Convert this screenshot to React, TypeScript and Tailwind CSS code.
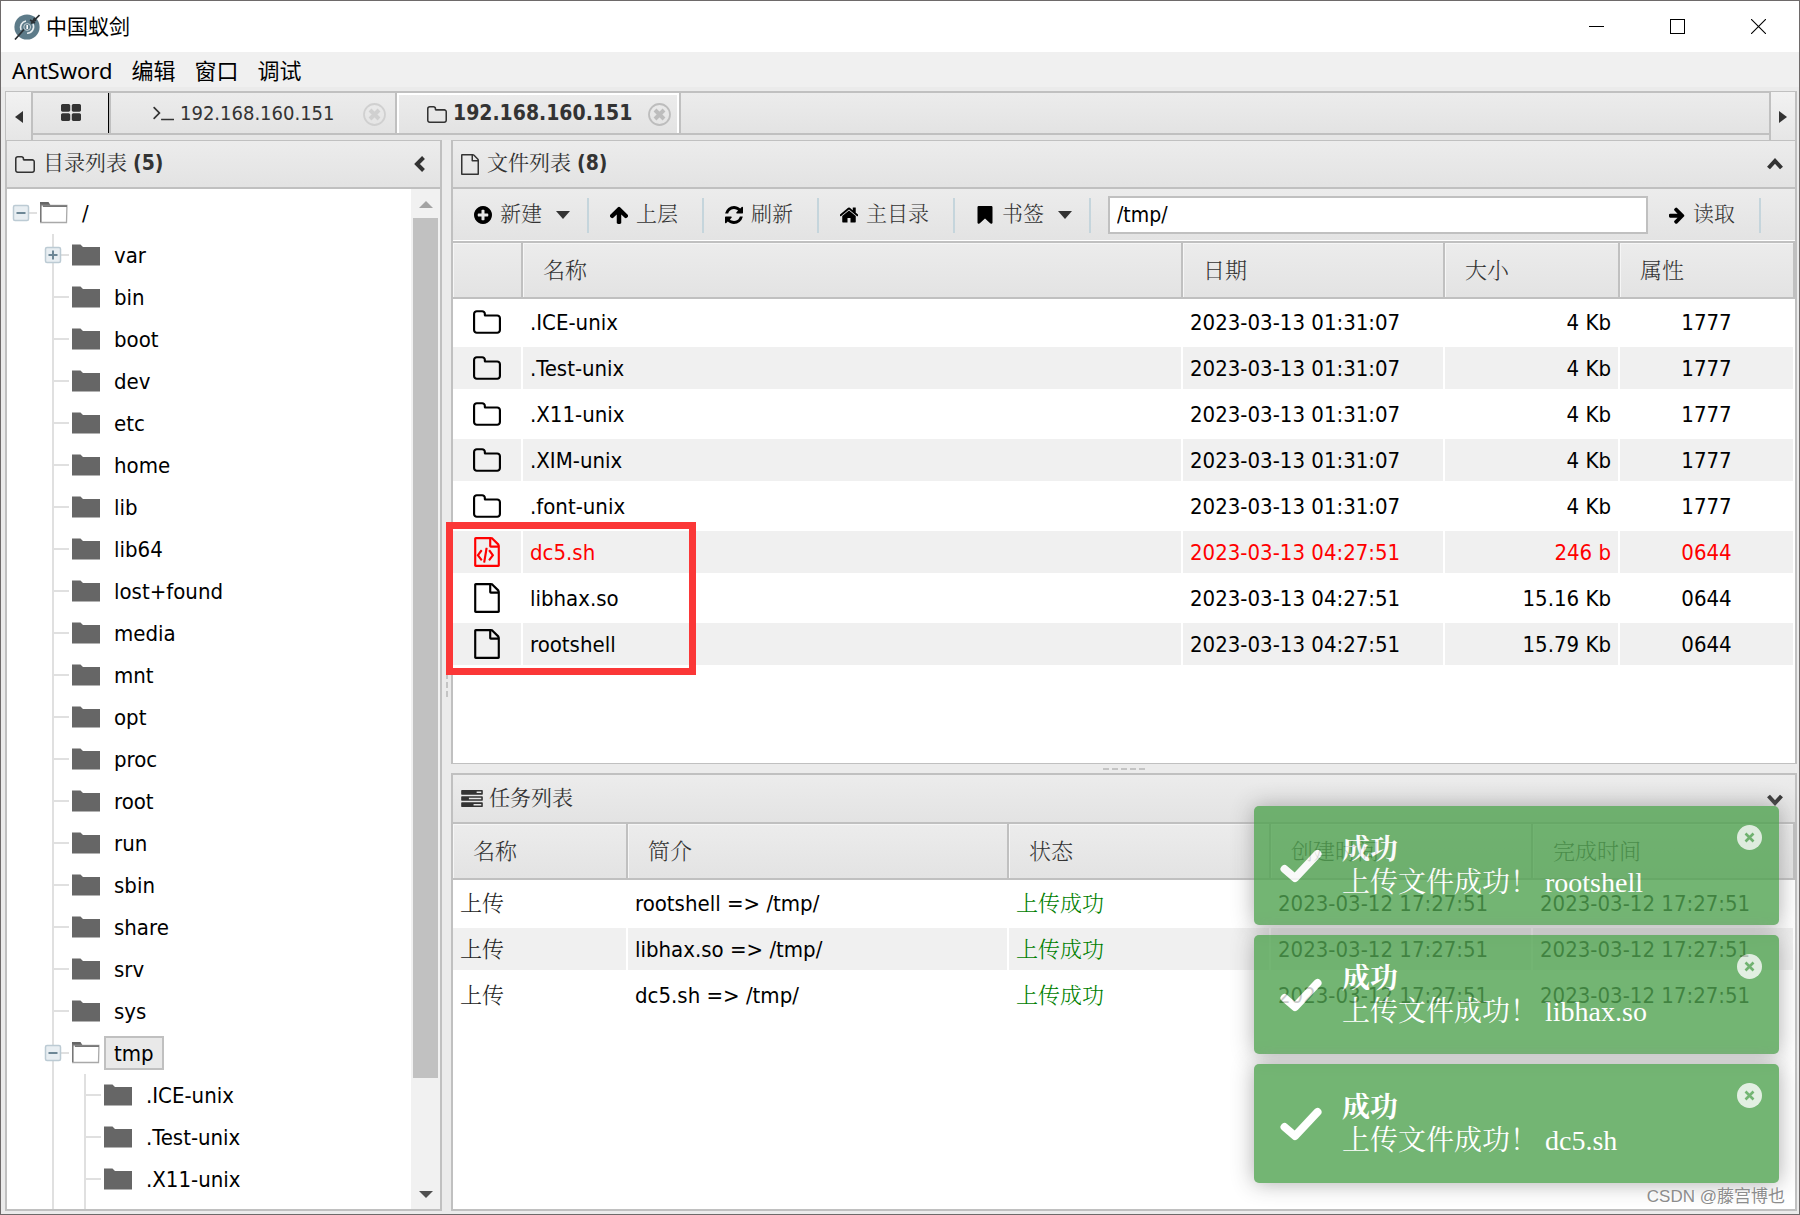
import React, { useState } from 'react';

type IconProps = { d: string; className?: string; box?: string };

// Font Awesome 4 outlines
const ICONS = {
  folder: 'M1536 1312v-704q0-40-28-68t-68-28h-704q-40 0-68-28t-28-68v-64q0-40-28-68t-68-28h-320q-40 0-68 28t-28 68v960q0 40 28 68t68 28h1216q40 0 68-28t28-68zm128-704v704q0 92-66 158t-158 66h-1216q-92 0-158-66t-66-158v-960q0-92 66-158t158-66h320q92 0 158 66t66 158v32h672q92 0 158 66t66 158z',
  file: 'M1596 380q28 28 48 76t20 88v1152q0 40-28 68t-68 28h-1344q-40 0-68-28t-28-68v-1600q0-40 28-68t68-28h896q40 0 88 20t76 48zm-444-244v376h376q-10-29-22-41l-313-313q-12-12-41-22zm384 1528v-1024h-416q-40 0-68-28t-28-68v-416h-768v1536h1280z',
  code: 'M1596 380q28 28 48 76t20 88v1152q0 40-28 68t-68 28h-1344q-40 0-68-28t-28-68v-1600q0-40 28-68t68-28h896q40 0 88 20t76 48zm-444-244v376h376q-10-29-22-41l-313-313q-12-12-41-22zm384 1528v-1024h-416q-40 0-68-28t-28-68v-416h-768v1536h1280zm-1024-896q8-11 21-12.5t24 6.5l51 38q11 8 12.5 21t-6.5 24l-182 243 182 243q8 11 6.5 24t-12.5 21l-51 38q-11 8-24 6.5t-21-12.5l-226-301q-14-19 0-38zm802 301q14 19 0 38l-226 301q-8 11-21 12.5t-24-6.5l-51-38q-11-8-12.5-21t6.5-24l182-243-182-243q-8-11-6.5-24t12.5-21l51-38q11-8 24-6.5t21 12.5zm-620 461q-13-2-20.5-13t-5.5-24l138-831q2-13 13-20.5t24-5.5l63 10q13 2 20.5 13t5.5 24l-138 831q-2 13-13 20.5t-24 5.5z',
  plus: 'M1344 960v-128q0-26-19-45t-45-19h-256v-256q0-26-19-45t-45-19h-128q-26 0-45 19t-19 45v256h-256q-26 0-45 19t-19 45v128q0 26 19 45t45 19h256v256q0 26 19 45t45 19h128q26 0 45-19t19-45v-256h256q26 0 45-19t19-45zm320-64q0 209-103 385.5t-279.5 279.5-385.5 103-385.5-103-279.5-279.5-103-385.5 103-385.5 279.5-279.5 385.5-103 385.5 103 279.5 279.5 103 385.5z',
  up: 'M1675 971q0 51-37 90l-75 75q-38 38-91 38-54 0-90-38l-294-293v704q0 52-37.5 84.5t-90.5 32.5h-128q-53 0-90.5-32.5t-37.5-84.5v-704l-294 293q-36 38-90 38t-90-38l-75-75q-38-38-38-90 0-53 38-91l651-651q35-37 90-37 54 0 91 37l651 651q37 39 37 91z',
  right: 'M1600 960q0 54-37 91l-651 651q-39 37-91 37-51 0-90-37l-75-75q-38-38-38-91t38-91l293-293h-704q-52 0-84.5-37.5t-32.5-90.5v-128q0-53 32.5-90.5t84.5-37.5h704l-293-294q-38-36-38-90t38-90l75-75q38-38 90-38 53 0 91 38l651 651q37 35 37 90z',
  refresh: 'M1639 1056q0 5-1 7-64 268-268 434.5t-478 166.5q-146 0-282.5-55t-243.5-157l-129 129q-19 19-45 19t-45-19-19-45v-448q0-26 19-45t45-19h448q26 0 45 19t19 45-19 45l-137 137q71 66 161 102t187 36q134 0 250-65t186-179q11-17 53-117 8-23 30-23h192q13 0 22.5 9.5t9.5 22.5zm25-800v448q0 26-19 45t-45 19h-448q-26 0-45-19t-19-45 19-45l138-138q-148-137-349-137-134 0-250 65t-186 179q-11 17-53 117-8 23-30 23h-199q-13 0-22.5-9.5t-9.5-22.5v-7q65-268 270-434.5t480-166.5q146 0 284 55.5t245 156.5l130-129q19-19 45-19t45 19 19 45z',
  home: 'M1472 992v480q0 26-19 45t-45 19h-384v-384h-256v384h-384q-26 0-45-19t-19-45v-480q0-1 .5-3t.5-3l575-474 575 474q1 2 1 6zm223-69l-62 74q-8 9-21 11h-3q-13 0-21-7l-692-577-692 577q-12 8-24 7-13-2-21-11l-62-74q-8-10-7-23.5t11-21.5l719-599q32-26 76-26t76 26l244 204v-195q0-14 9-23t23-9h192q14 0 23 9t9 23v408l219 182q10 8 11 21.5t-7 23.5z',
  bookmark: 'M1420 128q23 0 44 9 33 13 52.5 41t19.5 62v1289q0 34-19.5 62t-52.5 41q-19 8-44 8-48 0-83-32l-441-424-441 424q-36 33-83 33-23 0-44-9-33-13-52.5-41t-19.5-62v-1289q0-34 19.5-62t52.5-41q21-9 44-9h1048z',
  grid: 'M832 1024v384q0 52-38 90t-90 38h-512q-52 0-90-38t-38-90v-384q0-52 38-90t90-38h512q52 0 90 38t38 90zm0-768v384q0 52-38 90t-90 38h-512q-52 0-90-38t-38-90v-384q0-52 38-90t90-38h512q52 0 90 38t38 90zm896 768v384q0 52-38 90t-90 38h-512q-52 0-90-38t-38-90v-384q0-52 38-90t90-38h512q52 0 90 38t38 90zm0-768v384q0 52-38 90t-90 38h-512q-52 0-90-38t-38-90v-384q0-52 38-90t90-38h512q52 0 90 38t38 90z',
  terminal: 'M649 983l-466 466q-10 10-23 10t-23-10l-50-50q-10-10-10-23t10-23l393-393-393-393q-10-10-10-23t10-23l50-50q10-10 23-10t23 10l466 466q10 10 10 23t-10 23zm1079 457v64q0 14-9 23t-23 9h-960q-14 0-23-9t-9-23v-64q0-14 9-23t23-9h960q14 0 23 9t9 23z',
  tasks: 'M1024 1408h640v-128h-640v128zm-384-512h1024v-128h-1024v128zm640-512h384v-128h-384v128zm512 832v256q0 26-19 45t-45 19h-1664q-26 0-45-19t-19-45v-256q0-26 19-45t45-19h1664q26 0 45 19t19 45zm0-512v256q0 26-19 45t-45 19h-1664q-26 0-45-19t-19-45v-256q0-26 19-45t45-19h1664q26 0 45 19t19 45zm0-512v256q0 26-19 45t-45 19h-1664q-26 0-45-19t-19-45v-256q0-26 19-45t45-19h1664q26 0 45 19t19 45z',
};

const Icon: React.FC<IconProps> = ({ d, className = 'h-[18px] w-[18px]', box = '128 128 1536 1536' }) => (
  <svg viewBox={box} className={`shrink-0 fill-current ${className}`} aria-hidden="true">
    <path d={d} />
  </svg>
);

type TreeRow = { name: string; level: number; toggle?: 'plus' | 'minus'; selected?: boolean };

const TREE: TreeRow[] = [
  { name: '/', level: 0, toggle: 'minus' },
  { name: 'var', level: 1, toggle: 'plus' },
  ...['bin', 'boot', 'dev', 'etc', 'home', 'lib', 'lib64', 'lost+found', 'media', 'mnt', 'opt', 'proc', 'root', 'run', 'sbin', 'share', 'srv', 'sys']
    .map(name => ({ name, level: 1 })),
  { name: 'tmp', level: 1, toggle: 'minus', selected: true },
  { name: '.ICE-unix', level: 2 },
  { name: '.Test-unix', level: 2 },
  { name: '.X11-unix', level: 2 },
];

const FILES = [
  { icon: 'folder', name: '.ICE-unix', date: '2023-03-13 01:31:07', size: '4 Kb', attr: '1777' },
  { icon: 'folder', name: '.Test-unix', date: '2023-03-13 01:31:07', size: '4 Kb', attr: '1777' },
  { icon: 'folder', name: '.X11-unix', date: '2023-03-13 01:31:07', size: '4 Kb', attr: '1777' },
  { icon: 'folder', name: '.XIM-unix', date: '2023-03-13 01:31:07', size: '4 Kb', attr: '1777' },
  { icon: 'folder', name: '.font-unix', date: '2023-03-13 01:31:07', size: '4 Kb', attr: '1777' },
  { icon: 'code', name: 'dc5.sh', date: '2023-03-13 04:27:51', size: '246 b', attr: '0644' },
  { icon: 'file', name: 'libhax.so', date: '2023-03-13 04:27:51', size: '15.16 Kb', attr: '0644' },
  { icon: 'file', name: 'rootshell', date: '2023-03-13 04:27:51', size: '15.79 Kb', attr: '0644' },
] as const;

const TASKS = ['rootshell', 'libhax.so', 'dc5.sh'];
const TASK_TIME = '2023-03-12 17:27:51';

const TH = 'h-[56px] border-r-2 border-b-2 border-[#c0c0c0] bg-linear-to-b from-[#ececec] to-[#e3e3e3] pl-5 text-left font-light text-[#333] shadow-[inset_1px_1px_0_#f6f6f6]';
const TD = 'h-[46px] border-y-2 border-r-2 border-transparent bg-clip-padding px-[7px] whitespace-nowrap';
const BAR = 'bg-linear-to-b from-[#ececec] to-[#e3e3e3]';

const Logo = () => (
  <svg viewBox="0 0 26 26" className="h-[26px] w-[26px]" aria-hidden="true">
    <circle cx="13" cy="13" r="12.6" fill="#5d7b89" />
    <path d="M7 16a6.5 6.5 0 0 1 5-9M19 10a6.5 6.5 0 0 1-6 9.200" fill="none" stroke="#e9eef0" strokeWidth="1.600" />
    <circle cx="13.200" cy="13" r="3.400" fill="none" stroke="#c6d2d7" strokeWidth="1" />
    <path d="M13.200 11v4" stroke="#fff" strokeWidth="1.600" />
    <path d="M1 25.500L10 15.500M17 9.500L25.500 1M16 6l5 3M18 9l3-5" stroke="#2a2f33" strokeWidth="1.700" fill="none" />
    <path d="M20 3.500l2.500 3.500-4.500 1z" fill="#2a2f33" />
  </svg>
);

const TitleBar = () => (
  <header className="flex h-[51px] shrink-0 items-center bg-white pl-[13px] text-[21px] text-black">
    <Logo />
    <h1 className="ml-1.5 font-['Noto_Sans','Noto_Sans_CJK_SC',sans-serif]">中国蚁剑</h1>
    <div className="ml-auto flex h-full">
      <button aria-label="最小化" className="flex w-[81px] items-center justify-center">
        <span className="h-px w-[15px] bg-black" />
      </button>
      <button aria-label="最大化" className="flex w-[81px] items-center justify-center">
        <span className="h-[15px] w-[15px] border border-black" />
      </button>
      <button aria-label="关闭" className="flex w-[81px] items-center justify-center">
        <svg viewBox="0 0 15 15" className="h-[15px] w-[15px]" stroke="#000" strokeWidth="1.100">
          <path d="M0 0L15 15M15 0L0 15" />
        </svg>
      </button>
    </div>
  </header>
);

const MenuBar = () => (
  <nav className="flex h-[35px] shrink-0 items-center gap-[19px] bg-[#f0f0f0] pt-0.5 pl-[11px] font-['Noto_Sans','Noto_Sans_CJK_SC',sans-serif] text-[22px] text-black">
    {['AntSword', '编辑', '窗口', '调试'].map(item => (
      <button key={item}>{item}</button>
    ))}
  </nav>
);

const TabClose = ({ strong }: { strong?: boolean }) => (
  <button aria-label="关闭标签" className={strong ? 'text-[#bdbdbd]' : 'text-[#d0d0d0]'}>
    <svg viewBox="0 0 23 23" className="h-[23px] w-[23px]" fill="none" stroke="currentColor">
      <circle cx="11.500" cy="11.500" r="10.500" strokeWidth="1.800" />
      <path d="M7 7l9 9M16 7l-9 9" strokeWidth="4" />
    </svg>
  </button>
);

const TabBar = () => (
  <div className="flex h-[49px] shrink-0 bg-[#e6e6e6]">
    <button aria-label="向左" className="flex w-7 items-center justify-center border-t border-r-2 border-l border-[#c0c0c0] bg-linear-to-b from-[#f2f2f2] to-[#e6e6e6]">
      <svg viewBox="0 0 8 12" className="mt-0.5 h-3 w-2 fill-[#333]"><path d="M8 0v12L0 6z" /></svg>
    </button>
    <div className={`flex h-[44px] flex-1 border-y-2 border-[#c0c0c0] ${BAR}`}>
      <button aria-label="首页" className="flex w-[76px] items-center justify-center border-r border-black pb-0.5 text-[#333]">
        <Icon d={ICONS.grid} box="64 128 1664 1408" className="h-[17px] w-5" />
      </button>
      <div className="flex w-[288px] items-center border-r-2 border-l-2 border-[#c0c0c0] pl-[42px] text-[20px] text-[#333]">
        <Icon d={ICONS.terminal} box="64 256 1664 1408" className="h-[18px] w-[21px]" />
        <button className="ml-1.5">192.168.160.151</button>
        <span className="mt-0.5 ml-auto mr-[9px] flex"><TabClose /></span>
      </div>
      <div className="flex w-[282px] items-center border-x-2 border-t-2 border-white pl-7 text-[21px] text-[#333] shadow-[2px_0_0_#c0c0c0]">
        <Icon d={ICONS.folder} box="0 128 1664 1408" className="h-[17px] w-5" />
        <button className="ml-1.5 font-bold">192.168.160.151</button>
        <span className="ml-auto mr-1.5 flex"><TabClose strong /></span>
      </div>
    </div>
    <button aria-label="向右" className="flex w-7 items-center justify-center border-x-2 border-t border-[#c0c0c0] bg-linear-to-b from-[#f2f2f2] to-[#e6e6e6]">
      <svg viewBox="0 0 8 12" className="mt-0.5 h-3 w-2 fill-[#333]"><path d="M0 0v12l8-6z" /></svg>
    </button>
  </div>
);

const Chevron = ({ d, label }: { d: string; label: string }) => (
  <button aria-label={label} className="ml-auto">
    <svg viewBox="0 0 16 16" className="h-4 w-4" fill="none" stroke="#333" strokeWidth="4">
      <path d={d} />
    </svg>
  </button>
);

const TreeFolder = ({ open }: { open: boolean }) => (
  <svg viewBox="0 0 28 22" className="ml-px h-[22px] w-7 shrink-0" aria-hidden="true">
    {open ? (
      <>
        <path d="M0 0h8.500l2.500 4H0z" fill="#666" />
        <path d="M.7 20.500V3.500h26.200v2L26.500 20.500z" fill="#fff" stroke="#a9a9a9" strokeWidth="1.300" />
        <path d="M.6 20V2.500M3 4.200h24" stroke="#777" strokeWidth="1.700" />
      </>
    ) : (
      <path d="M0 .5h8.500l2.500 2.500H28V21.500H0z" fill="#666" />
    )}
  </svg>
);

// One indentation step of the tree, with its guide lines and expander
const Guide = ({ line, branch, toggle }: { line: boolean; branch: boolean; toggle?: string }) => (
  <svg viewBox="0 0 32 42" className="h-[42px] w-8 shrink-0" stroke="#e0e0e0" strokeWidth="2" fill="none" aria-hidden="true">
    {line && <path d="M14 0v42" />}
    {branch && <path d="M14 21h16" />}
    {toggle && (
      <>
        <rect x="6.500" y="13.500" width="15" height="15" rx="1.500" fill="#e8eef2" stroke="#bccbd4" strokeWidth="1.500" />
        <path d={toggle === 'plus' ? 'M9.500 21h9M14 16.500v9' : 'M9.500 21h9'} stroke="#6d8796" />
      </>
    )}
  </svg>
);

const DirectoryPanel = () => (
  <aside className="flex w-[437px] shrink-0 flex-col border-x-2 border-t border-b-2 border-[#c0c0c0] bg-white">
    <div className={`flex h-[48px] shrink-0 items-center border-b-2 border-[#c0c0c0] pr-3 pl-2 text-[21px] text-[#333] ${BAR}`}>
      <Icon d={ICONS.folder} box="0 128 1664 1408" className="h-[17px] w-5" />
      <h2 className="ml-2">目录列表 <b>(5)</b></h2>
      <Chevron label="收起目录" d="M11.500 1.500L5 8l6.500 6.500" />
    </div>
    <div className="flex min-h-0 flex-1">
      <ul className="min-w-0 flex-1 overflow-hidden pt-[3px] text-[22px] text-black">
        {TREE.map(row => (
          <li key={row.name + row.level} className="flex h-[42px] items-center">
            {row.level > 0 && <Guide line={false} branch={false} />}
            {row.level > 1 && <Guide line branch={false} />}
            <Guide line={row.level > 0} branch toggle={row.toggle} />
            <TreeFolder open={row.toggle === 'minus'} />
            <button className={`ml-1 flex h-[34px] items-center border-2 px-2 ${row.selected ? 'border-[#c0c0c0] bg-[#e9e9e9]' : 'border-transparent'}`}>
              {row.name}
            </button>
          </li>
        ))}
        <li className="flex h-[42px]" aria-hidden="true">
          <Guide line={false} branch={false} />
          <Guide line branch={false} />
          <Guide line branch={false} />
        </li>
      </ul>
      <div className="flex w-[29px] shrink-0 flex-col bg-[#f1f1f1]">
        <button aria-label="向上滚动" className="flex h-[29px] items-center justify-center">
          <svg viewBox="0 0 14 7" className="mt-0.5 h-[7px] w-3.5 fill-[#a3a3a3]"><path d="M0 7h14L7 0z" /></svg>
        </button>
        <div className="min-h-0 flex-1 px-0.5">
          <div className="h-[calc(100%-102px)] bg-[#c1c1c1]" />
        </div>
        <button aria-label="向下滚动" className="flex h-[29px] items-center justify-center">
          <svg viewBox="0 0 14 7" className="h-[7px] w-3.5 fill-[#505050]"><path d="M0 0h14L7 7z" /></svg>
        </button>
      </div>
    </div>
  </aside>
);

const ToolButton = ({ icon, text, caret, className = 'w-[18px]' }: { icon: string; text: string; caret?: boolean; className?: string }) => (
  <button className={`flex h-[35px] shrink-0 items-center gap-2 border-r-2 border-[#c5d5dc] pl-[21px] font-light ${caret ? 'pr-[17px]' : 'pr-6'}`}>
    <Icon d={icon} className={`h-[18px] text-black ${className}`} />
    <span>{text}</span>
    {caret && <svg viewBox="0 0 14 8" className="ml-1.5 h-2 w-3.5 fill-[#333]"><path d="M0 0h14L7 8z" /></svg>}
  </button>
);

const FilePanel = () => {
  const [path, setPath] = useState('/tmp/');

  return (
    <section className="relative flex min-h-0 flex-1 flex-col border-x-2 border-y border-[#c0c0c0] bg-white">
      <div className={`flex h-[48px] shrink-0 items-center border-b-2 border-[#c0c0c0] pr-3 pl-2 text-[21px] text-[#333] ${BAR}`}>
        <Icon d={ICONS.file} box="128 0 1536 1792" className="h-[21px] w-[18px]" />
        <h2 className="ml-2">文件列表 <b>(8)</b></h2>
        <Chevron label="收起文件列表" d="M1.500 12L8 5l6.500 7" />
      </div>
      <div className={`flex h-[54px] shrink-0 items-center border-b-2 border-[#c0c0c0] text-[21px] text-[#333] shadow-[inset_0_-1px_0_#fff] ${BAR}`}>
        <ToolButton icon={ICONS.plus} text="新建" caret />
        <ToolButton icon={ICONS.up} text="上层" />
        <ToolButton icon={ICONS.refresh} text="刷新" />
        <ToolButton icon={ICONS.home} text="主目录" />
        <ToolButton icon={ICONS.bookmark} text="书签" caret />
        <input
          aria-label="路径"
          value={path}
          onChange={e => setPath(e.target.value)}
          className="ml-[17px] h-[38px] min-w-0 flex-1 border-2 border-[#c0c0c0] bg-white px-[7px] text-black outline-none"
        />
        <ToolButton icon={ICONS.right} text="读取" className="w-4" />
        <div className="w-[34px] shrink-0" />
      </div>
      <table className="w-full table-fixed border-separate border-spacing-0 text-[22px] text-black">
        <colgroup>
          <col className="w-[70px]" />
          <col />
          <col className="w-[262px]" />
          <col className="w-[175px]" />
          <col className="w-[175px]" />
        </colgroup>
        <thead>
          <tr>
            <th className={TH} aria-label="类型" />
            <th className={TH}>名称</th>
            <th className={TH}>日期</th>
            <th className={TH}>大小</th>
            <th className={TH}>属性</th>
          </tr>
        </thead>
        <tbody>
          {FILES.map(f => (
            <tr key={f.name} className={`${f.icon === 'code' ? 'text-[#f00]' : ''} [&:nth-child(even)>td]:bg-[#f0f0f0]`}>
              <td className={TD}>
                {f.icon === 'folder' ? (
                  <Icon d={ICONS.folder} box="0 128 1664 1408" className="mx-auto h-6 w-7" />
                ) : (
                  <Icon d={ICONS[f.icon]} box="128 0 1536 1792" className="mx-auto h-[30px] w-[26px]" />
                )}
              </td>
              <td className={TD}>{f.name}</td>
              <td className={TD}>{f.date}</td>
              <td className={`${TD} text-right`}>{f.size}</td>
              <td className={`${TD} text-center`}>{f.attr}</td>
            </tr>
          ))}
        </tbody>
      </table>
      <div className="pointer-events-none absolute top-[381px] -left-[7px] z-10 h-[153px] w-[250px] border-[7px] border-[#fb3737]" />
    </section>
  );
};

const TaskPanel = () => (
  <section className="flex h-[438px] shrink-0 flex-col border-2 border-[#c0c0c0] bg-white">
    <div className={`flex h-[49px] shrink-0 items-center border-b-2 border-[#c0c0c0] pr-3 pl-2 text-[21px] text-[#333] ${BAR}`}>
      <Icon d={ICONS.tasks} box="0 128 1792 1408" className="h-[17px] w-[22px]" />
      <h2 className="ml-1.5">任务列表</h2>
      <Chevron label="收起任务列表" d="M1.500 5L8 12l6.500-7" />
    </div>
    <table className="w-full table-fixed border-separate border-spacing-0 text-[22px] text-black">
      <colgroup>
        <col className="w-[175px]" />
        <col />
        <col className="w-[262px]" />
        <col className="w-[262px]" />
        <col className="w-[262px]" />
      </colgroup>
      <thead>
        <tr>
          {['名称', '简介', '状态', '创建时间', '完成时间'].map(h => (
            <th key={h} className={TH}>{h}</th>
          ))}
        </tr>
      </thead>
      <tbody>
        {TASKS.map(name => (
          <tr key={name} className="[&:nth-child(even)>td]:bg-[#f0f0f0]">
            <td className={`${TD} font-light text-[#222]`}>上传</td>
            <td className={TD}>{name} =&gt; /tmp/</td>
            <td className={`${TD} font-light text-[#008000]`}>上传成功</td>
            <td className={TD}>{TASK_TIME}</td>
            <td className={TD}>{TASK_TIME}</td>
          </tr>
        ))}
      </tbody>
    </table>
  </section>
);

const Toast = ({ file, onClose }: { file: string; onClose: () => void }) => (
  <div role="status" className="relative flex h-[119px] w-[525px] items-center rounded-[5px] bg-[#51a351] pl-[26px] font-['Liberation_Serif','Noto_Serif_CJK_SC','Noto_Sans_CJK_SC',serif] text-[28px] leading-[33px] text-white opacity-80 shadow-[0_0_21px_#999]">
    <svg viewBox="0 0 42 34" className="h-[34px] w-[42px]" fill="none" stroke="#fff" strokeWidth="8" strokeLinecap="round" aria-hidden="true">
      <path d="M4.500 20L15 29 37.500 5" strokeLinejoin="round" />
    </svg>
    <div className="ml-5">
      <p className="font-bold">成功</p>
      <p>上传文件成功！ {file}</p>
    </div>
    <button aria-label="关闭通知" onClick={onClose} className="absolute top-[19px] right-[17px] opacity-80">
      <svg viewBox="0 0 25 25" className="h-[25px] w-[25px]">
        <circle cx="12.500" cy="12.500" r="12.500" fill="#fff" />
        <path d="M8.500 8.500l8 8M16.500 8.500l-8 8" stroke="#51a351" strokeWidth="2.600" />
      </svg>
    </button>
  </div>
);

const App: React.FC = () => {
  const [toasts, setToasts] = useState(TASKS);

  return (
    <div className="relative flex h-screen flex-col overflow-hidden border border-[#6e6a6a] bg-[#ebebeb] font-['DejaVu_Sans_Condensed','Noto_Serif_CJK_SC','Noto_Sans_CJK_SC',sans-serif]">
      <TitleBar />
      <MenuBar />
      <div className="flex min-h-0 flex-1 flex-col pt-1 pr-0.5 pb-[3px] pl-1">
        <TabBar />
        <main className="flex min-h-0 flex-1">
          <DirectoryPanel />
          <div className="flex w-[9px] shrink-0 items-center justify-center">
            <span className="h-[42px] border-l-2 border-dashed border-[#c4c4c4]" />
          </div>
          <div className="flex min-w-0 flex-1 flex-col">
            <FilePanel />
            <div className="flex h-[9px] shrink-0 items-center justify-center">
              <span className="w-[42px] border-t-2 border-dashed border-[#c4c4c4]" />
            </div>
            <TaskPanel />
          </div>
        </main>
      </div>
      <div className="absolute right-5 bottom-[31px] flex flex-col gap-2.5">
        {toasts.map(file => (
          <Toast key={file} file={file} onClose={() => setToasts(toasts.filter(t => t !== file))} />
        ))}
      </div>
      <p className="absolute right-3.5 bottom-1 font-['Liberation_Sans','Noto_Sans_CJK_SC',sans-serif] text-[17px] leading-[26px] text-[#8c8c8c] [text-shadow:1px_1px_0_#fff]">
        CSDN @藤宫博也
      </p>
    </div>
  );
};

export default App;
